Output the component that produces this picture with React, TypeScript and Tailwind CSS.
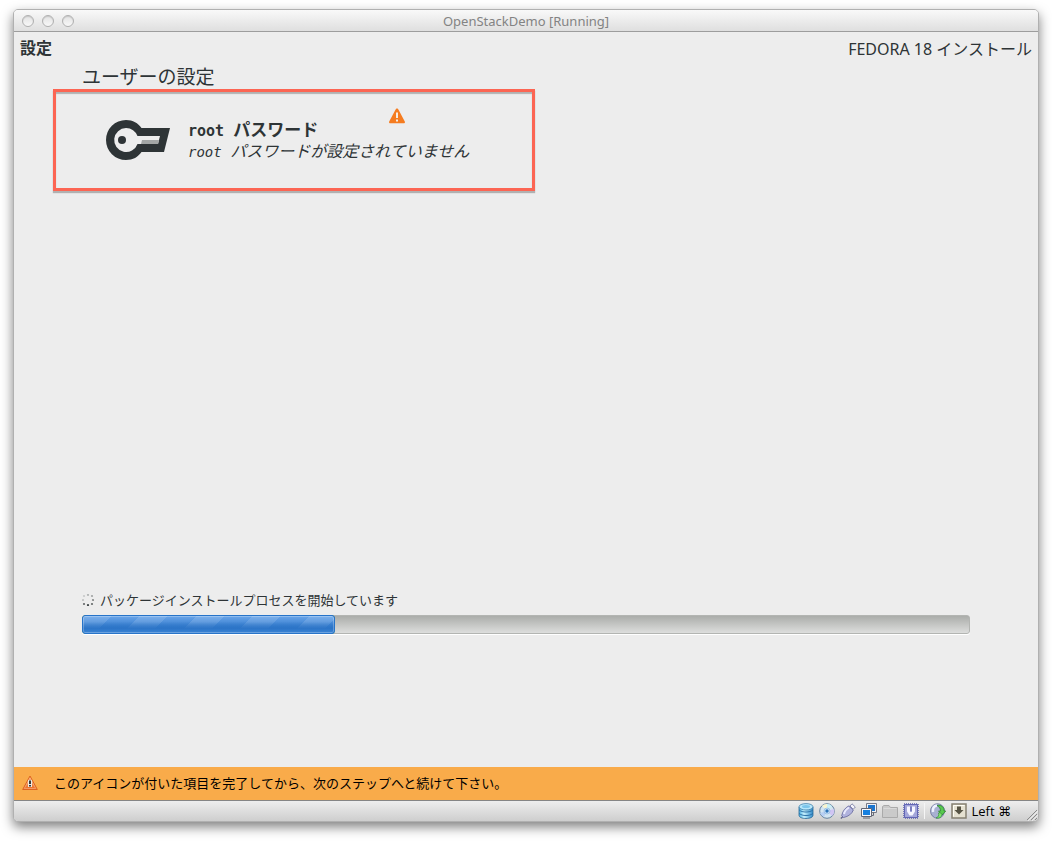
import React from "react";

const JP = "font-['Noto_Sans','Noto_Sans_CJK_JP',sans-serif]";

function KeyIcon() {
  return (
    <svg width="64" height="40" viewBox="0 0 64 40" aria-hidden="true" className="shrink-0">
      <path
        fill="#2e3436"
        fillRule="evenodd"
        d="M20 0C27 0 32 3 35.500 8H64L58 32H35.500C32 37 27 40 20 40A20 20 0 0 1 20 0ZM20 8A12 12 0 1 0 31.500 24H52L54 16H31.500A12 12 0 0 0 20 8Z"
      />
      <circle cx="16" cy="20" r="4" fill="#2e3436" />
      <path d="M36 20H53L52 24H35Z" fill="#a3a6a5" />
    </svg>
  );
}

function AlertIcon() {
  return (
    <svg width="16" height="16" viewBox="0 0 16 16" role="img" aria-label="警告">
      <path d="M8 .5C8.700.5 9.100 1 9.400 1.600L15.800 13.500C16.200 14.500 15.700 15.300 14.800 15.300H1.200C.3 15.300-.2 14.500.2 13.500L6.600 1.600C6.900 1 7.300.5 8 .5Z" fill="#f57c20" />
      <path d="M7 4.500H9V10H7ZM7 11.500H9V13.500H7Z" fill="#f4eee6" />
    </svg>
  );
}

function WarningIcon() {
  return (
    <svg width="16" height="16" viewBox="0 0 16 16" aria-hidden="true" className="shrink-0">
      <defs>
        <linearGradient id="warn" x1="0" y1="0" x2="0" y2="1">
          <stop offset="0" stopColor="#f9ae79" />
          <stop offset="1" stopColor="#ec6a22" />
        </linearGradient>
      </defs>
      <path d="M8 1 15.300 14.500H.7Z" fill="url(#warn)" stroke="#dc6420" strokeLinejoin="round" />
      <path d="M8 3 13.700 13.500H2.300Z" fill="none" stroke="#fac29c" strokeWidth=".5" />
      <path d="M6 5H10V12H6Z" fill="#eee8df" />
      <path d="M7 5.500H9V9H7ZM7 10H9V11.500H7Z" fill="#393939" />
    </svg>
  );
}

const dots = [
  [6, 1, "#b2b5b5"],
  [10, 2, "#a0a3a3"],
  [11, 6, "#858989"],
  [10, 10, "#646969"],
  [6, 11, "#3d4345"],
  [2, 10, "#626667"],
  [1, 6, "#c0c2c2"],
  [2, 2, "#c6c8c8"],
] as const;

function Spinner() {
  return (
    <svg width="12" height="12" viewBox="0 0 12 12" aria-hidden="true">
      {dots.map(([x, y, c]) => (
        <circle key={`${x}-${y}`} cx={x} cy={y} r="1.100" fill={c} />
      ))}
    </svg>
  );
}

function DiskIcon() {
  return (
    <svg width="16" height="16" viewBox="0 0 16 16">
      <defs>
        <linearGradient id="disk">
          <stop offset="0" stopColor="#4aaee2" />
          <stop offset=".35" stopColor="#c9f3ff" />
          <stop offset="1" stopColor="#2f8aca" />
        </linearGradient>
      </defs>
      <path d="M1 4V12.200C1 14.300 4 15.500 8 15.500S15 14.300 15 12.200V4Z" fill="url(#disk)" stroke="#2b6a96" strokeWidth=".8" />
      <ellipse cx="8" cy="3.800" rx="7" ry="3.200" fill="#b6e6fa" stroke="#4583ac" strokeWidth=".8" />
      <ellipse cx="8" cy="3.600" rx="4" ry="1.500" fill="#7cc5ea" />
      <path d="M1.200 7C4 9.700 12 9.700 14.800 7M1.200 10.500C4 13.200 12 13.200 14.800 10.500" fill="none" stroke="#2469a0" strokeWidth=".9" />
    </svg>
  );
}

function DiscIcon() {
  return (
    <svg width="16" height="16" viewBox="0 0 16 16">
      <circle cx="8" cy="8" r="7.300" fill="#d3e5f2" stroke="#67849f" />
      <path d="M8 8 3 2.800A7 7 0 0 1 8 1Z" fill="#f8f4ce" />
      <path d="M8 8V1A7 7 0 0 1 13 3Z" fill="#c8f0f6" />
      <path d="M8 8 15 6A7 7 0 0 1 13 13Z" fill="#d0c5f3" />
      <path d="M8 8 1 10A7 7 0 0 0 5 14Z" fill="#b7cff3" />
      <circle cx="8" cy="8" r="3" fill="#c9e2f9" stroke="#8eb8df" strokeWidth=".7" />
      <circle cx="8" cy="8" r="1.700" fill="#2b73b8" />
    </svg>
  );
}

function UsbIcon() {
  return (
    <svg width="16" height="16" viewBox="0 0 16 16">
      <path d="M10 3 12 .8 15.300 4 13.200 6.300Z" fill="#f4f4fa" stroke="#70749b" strokeWidth=".8" />
      <path d="M3.500 13 .8 15.500" stroke="#5d608b" strokeWidth="1.300" />
      <path d="M9 2.800 13.300 7C12 10.800 8.500 13.500 3.500 14.500L1.700 12.700C2.500 8 5.500 4.500 9 2.800Z" fill="#b0b2dd" stroke="#62659a" strokeWidth=".8" />
      <path d="M9 4.500C6.500 6 4.500 8.500 4 11" stroke="#e9eafd" strokeWidth="2" fill="none" />
    </svg>
  );
}

function NetworkIcon() {
  return (
    <svg width="16" height="16" viewBox="0 0 16 16">
      <path d="M5.500.5H15.500V9.500H5.500Z" fill="#f0f1f5" stroke="#777a86" />
      <path d="M7 2H14V8H7Z" fill="#1b75ce" />
      <path d="M12.500 9.500V12.500H10.500" stroke="#656a77" fill="none" />
      <path d="M.5 5.500H10.500V13.500H.5Z" fill="#f6f7fb" stroke="#626674" />
      <path d="M2 7H9V12H2Z" fill="#1680e0" />
      <path d="M2 15H9" stroke="#626674" />
    </svg>
  );
}

function FolderIcon() {
  return (
    <svg width="16" height="16" viewBox="0 0 16 16">
      <path d="M.5 14.500V3.500L2 2.500H7L8.500 4.500H15.500V14.500Z" fill="#cacaca" stroke="#aaaaaa" strokeLinejoin="round" />
      <path d="M1.500 5.500H14.500" stroke="#dadada" />
    </svg>
  );
}

function ChipIcon() {
  return (
    <svg width="16" height="16" viewBox="0 0 16 16">
      <path d="M1 1H15V15H1Z" fill="none" stroke="#5b5fae" strokeWidth="1.500" strokeDasharray="1 1" />
      <path d="M1.500 1.500H14.500V14.500H1.500Z" fill="#a3a6da" stroke="#6266b4" />
      <path d="M4 3.500H7V9H9V3.500H12V8.500L9.500 12.500H6.500L4 8.500Z" fill="#f6f6ff" />
      <path d="M7 3.500H9V8H7Z" fill="#797dbf" />
    </svg>
  );
}

function MouseIcon() {
  return (
    <svg width="16" height="16" viewBox="0 0 16 16">
      <ellipse cx="7.500" cy="8" rx="7" ry="7.300" fill="#a8b0d2" stroke="#6c739a" strokeWidth=".8" />
      <path d="M3 9C2.500 5.500 4 3 7 2.500" fill="none" stroke="#eef1ff" strokeWidth="2.500" />
      <path d="M7 2.500C11.500 1.500 14.500 4.500 14 8H15.800L12 12 8.500 8H10.500C10.500 5.500 9.500 4 7 2.500Z" fill="#58c94f" stroke="#287e2c" strokeWidth=".7" />
      <path d="M12 11.500C11.500 14.500 9.500 15.500 6 15C8.500 14 9 12.500 8.500 10L10 9.500Z" fill="#7fe36e" stroke="#298530" strokeWidth=".6" />
    </svg>
  );
}

function CaptureIcon() {
  return (
    <svg width="16" height="16" viewBox="0 0 16 16">
      <path d="M1 1H15V15H1Z" fill="#e5e1d1" stroke="#858071" strokeWidth="1.500" />
      <path d="M2.500 13.500V2.500H13.500" stroke="#fffef5" fill="none" />
      <path d="M6 3.500H10V7H12.500L8 11.500 3.500 7H6Z" fill="#575445" />
    </svg>
  );
}

const statusIcons = [
  { label: "Hard disks", Icon: DiskIcon },
  { label: "CD/DVD devices", Icon: DiscIcon },
  { label: "USB devices", Icon: UsbIcon },
  { label: "Network adapters", Icon: NetworkIcon },
  { label: "Shared folders", Icon: FolderIcon },
  { label: "Virtualization features", Icon: ChipIcon },
];

function StatusButton({ label, children }: { label: string; children: React.ReactNode }) {
  return (
    <button type="button" aria-label={label} className="block size-4">
      {children}
    </button>
  );
}

export default function App() {
  return (
    <div className={`flex min-h-screen flex-col bg-white px-[13px] pt-[9px] pb-[19px] text-[#2e3436] ${JP}`}>
      <div className="flex flex-1 flex-col overflow-hidden rounded-[5px] border border-[#b0b0b0] bg-[#ededed] shadow-[0_5px_12px_rgba(0,0,0,0.5)]">
        <header className="grid h-[22px] grid-cols-[1fr_auto_1fr] items-center border-b border-[#9d9d9d] bg-linear-to-b from-[#f9f9f9] to-[#dfdfdf] px-2">
          <div className="flex gap-2">
            {["Close", "Minimize", "Zoom"].map((name) => (
              <button
                key={name}
                type="button"
                aria-label={name}
                className="size-3 rounded-full border border-[#b0b0b0] bg-linear-to-b from-[#e2e2e2] to-[#f8f8f8] shadow-[inset_0_1px_1px_rgba(0,0,0,0.12)]"
              />
            ))}
          </div>
          <h1 className="font-['Noto_Sans',sans-serif] text-[13px] leading-5 text-[#838383]">OpenStackDemo [Running]</h1>
        </header>

        <main className="flex flex-1 flex-col">
          <div className="flex items-start justify-between px-[6px] pt-1">
            <h2 className="text-[16px] leading-6 font-bold">設定</h2>
            <p className="pt-px text-[16px] leading-6">FEDORA 18 インストール</p>
          </div>

          <section className="px-[39px]">
            <h3 className="pt-1 pl-[29px] text-[19px] leading-6">ユーザーの設定</h3>
            <button
              type="button"
              className="flex h-[102px] w-[482px] max-w-full items-start border-[3px] border-[#fc6553] pl-[50px] text-left shadow-[0_2px_1px_rgba(0,0,0,0.25),inset_0_2px_1px_rgba(0,0,0,0.25)]"
            >
              <span className="pt-7">
                <KeyIcon />
              </span>
              <span className="relative block pt-7 pl-[18px]">
                <span className="block text-[17px] leading-5 font-bold whitespace-pre">
                  <span className="font-['DejaVu_Sans_Mono',monospace] text-[15px]">root </span>パスワード
                </span>
                <span className="block text-[16px] leading-5 whitespace-pre italic">
                  <span className="font-['DejaVu_Sans_Mono',monospace] text-[14px]">root </span>パスワードが設定されていません
                </span>
                <span className="absolute top-4 right-16">
                  <AlertIcon />
                </span>
              </span>
            </button>
          </section>

          <section className="mt-auto px-[68px] pb-[133px]">
            <div className="flex items-center gap-[6px]">
              <Spinner />
              <label htmlFor="install-progress" className="text-[13px] leading-5">
                パッケージインストールプロセスを開始しています
              </label>
            </div>
            <progress
              id="install-progress"
              value={28.5}
              max={100}
              className="mt-[5px] block h-[19px] w-full appearance-none overflow-hidden rounded-[3px] border-0 bg-transparent shadow-[0_1px_0_#ffffff] [&::-webkit-progress-bar]:rounded-[3px] [&::-webkit-progress-bar]:bg-[linear-gradient(#a8aaa7,#e0e1e0)] [&::-webkit-progress-bar]:shadow-[inset_0_0_0_1px_#b3b5b2] [&::-webkit-progress-value]:rounded-[3px] [&::-webkit-progress-value]:border [&::-webkit-progress-value]:border-[#2774c9] [&::-webkit-progress-value]:bg-[linear-gradient(transparent_35%,#2c75c8_75%,#3c85d6),repeating-linear-gradient(135deg,rgba(255,255,255,0.12)_0px,rgba(255,255,255,0.12)_20px,transparent_20px,transparent_40px),linear-gradient(#6ba6ea,#2c75c8_75%)] [&::-webkit-progress-value]:shadow-[inset_0_0_0_1px_rgba(255,255,255,0.25)]"
            />
          </section>
        </main>

        <div role="status" className="flex h-[33px] items-center gap-4 bg-[#f9ab4a] pb-[2px] pl-2 text-[13px] leading-5 text-black">
          <WarningIcon />
          <p>このアイコンが付いた項目を完了してから、次のステップへと続けて下さい。</p>
        </div>

        <footer className="relative flex h-[21px] items-center justify-end gap-[5px] border-t border-[#858585] bg-linear-to-b from-[#eeeeee] to-[#cecece] pr-[27px]">
          {statusIcons.map(({ label, Icon }) => (
            <StatusButton key={label} label={label}>
              <Icon />
            </StatusButton>
          ))}
          <span className="h-4 w-px border-l border-[#f5f5f5]" />
          <StatusButton label="Mouse integration">
            <MouseIcon />
          </StatusButton>
          <StatusButton label="Keyboard capture">
            <CaptureIcon />
          </StatusButton>
          <span className="font-['Open_Sans','DejaVu_Sans',sans-serif] text-[13px] leading-5 text-black">Left ⌘</span>
          <svg width="12" height="12" viewBox="0 0 12 12" aria-hidden="true" className="absolute right-0 bottom-0">
            <path d="M1 11 11 1M5 11 11 5M9 11 11 9" stroke="#8a8a8a" />
            <path d="M2 12 12 2M6 12 12 6" stroke="#f4f4f4" strokeWidth=".7" />
          </svg>
        </footer>
      </div>
    </div>
  );
}
